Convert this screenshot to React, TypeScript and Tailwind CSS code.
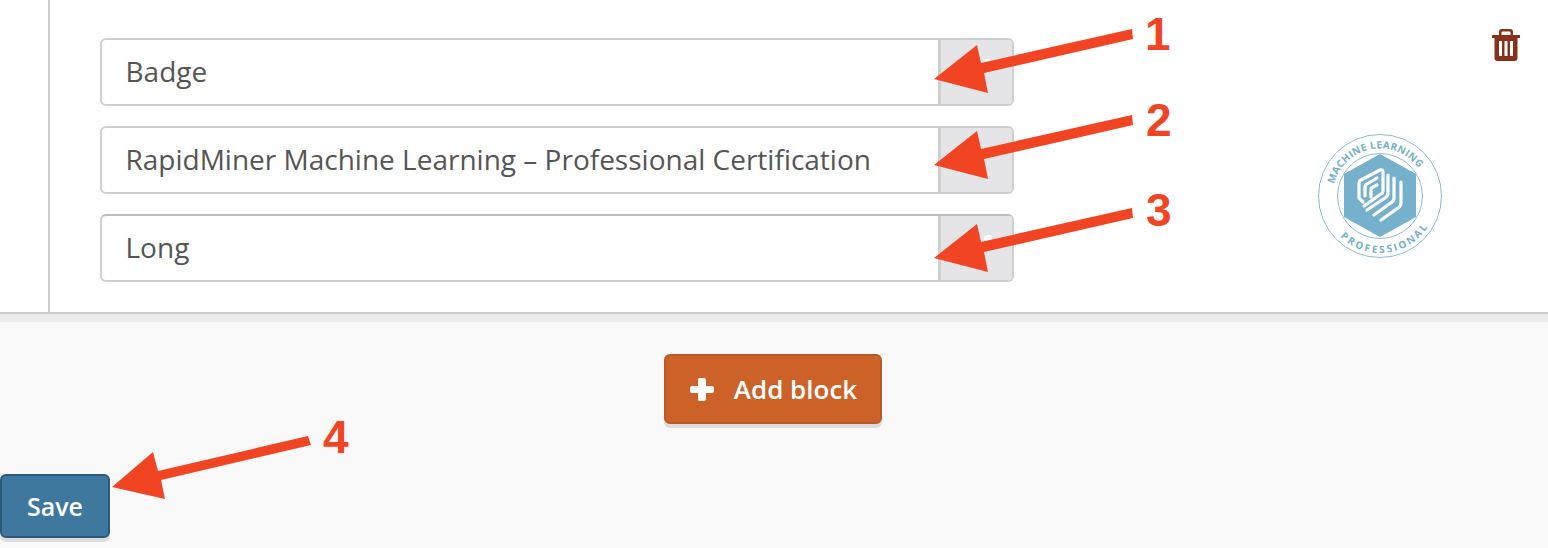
const arrows = [
  "934,79 977,45 981,63 1132,29 1133,39 984,73 988,93",
  "934,165 977,131 981,149 1132,115 1133,125 984,159 988,179",
  "934,258 977,224 981,242 1132,208 1133,218 984,252 988,272",
  "112,487 153,452 158,471 308,436 311,445 161,480 165,499",
];

const Field = ({ value, dot, darkTop }: { value: string; dot?: boolean; darkTop?: boolean }) => (
  <div
    className={`flex h-[68px] w-[914px] overflow-hidden rounded-[6px] border-2 border-[#cfcfcf] bg-white ${
      darkTop ? "border-t-[#bdbdbd]" : ""
    }`}
  >
    <div className="flex flex-1 items-center pb-[2px] pl-[24px] text-[28px] text-[#555555]">
      <span className="-ml-[0.5px]">{value}</span>
    </div>
    <div className="relative w-[74px] border-l-[3px] border-[#cfcfcf] bg-[#e5e5e8]">
      {dot && <span className="absolute left-[43px] top-[19px] h-[6px] w-[8px] rounded-full bg-white" />}
    </div>
  </div>
);

const TrashIcon = () => (
  <svg width="30" height="34" viewBox="0 0 30 34" className="block">
    <path
      fill="#87301a"
      fillRule="evenodd"
      d="M8 7 L8 4 Q8 1 11 1 L19 1 Q22 1 22 4 L22 7 L29 7 L29 10 L26.5 10 L26.5 30 Q26.5 33 23.5 33 L6.5 33 Q3.5 33 3.5 30 L3.5 10 L1 10 L1 7 Z M10.5 7 L19.5 7 L19.5 4.5 Q19.5 3.5 18.5 3.5 L11.5 3.5 Q10.5 3.5 10.5 4.5 Z M8 13 L8 28 L11 28 L11 13 Z M13.5 13 L13.5 28 L16.5 28 L16.5 13 Z M19 13 L19 28 L22 28 L22 13 Z"
    />
  </svg>
);

const BadgeLogo = () => (
  <svg width="126" height="126" viewBox="0 0 126 126" className="block">
    <defs>
      <path id="arcTop" d="M 17 51 A 47.5 47.5 0 0 1 101.4 35" />
      <path id="arcBottom" d="M 23.2 103.8 A 57 57 0 0 0 110.6 94.4" />
    </defs>
    <circle cx="63" cy="63" r="61.5" fill="none" stroke="#8abdd5" strokeWidth="1" />
    <circle cx="63" cy="63" r="42.5" fill="none" stroke="#8abdd5" strokeWidth="1" />
    <polygon points="63,21 99,41 99,84 63,104 27,84 27,41" fill="#75b0cc" />
    <g fill="none" stroke="white" strokeWidth="3.2" strokeLinecap="round" strokeLinejoin="round">
      <path d="M46 69 L42 65 L42 50 Q42 48 44 47 L63 37 Q66 36 66 39 L66 58 Q66 60 64 61 L47 73" />
      <path d="M48 63 L48 53 Q48 52 50 51 L60 45" />
      <path d="M54 64 L54 56 Q54 55 56 54 L60 52" />
      <path d="M50 77 L68 65 Q71 63 71 60 L71 42" />
      <path d="M57 82 L75 69 Q77 68 77 65 L77 45" />
      <path d="M64 87 L81 75 Q84 73 84 70 L84 49" />
    </g>
    <text fill="#75b0cc" fontSize="10" fontWeight="700" fontFamily="'Open Sans', sans-serif">
      <textPath href="#arcTop" textLength="107" lengthAdjust="spacing">MACHINE LEARNING</textPath>
    </text>
    <text fill="#75b0cc" fontSize="10" fontWeight="700" fontFamily="'Open Sans', sans-serif">
      <textPath href="#arcBottom" textLength="100" lengthAdjust="spacing">PROFESSIONAL</textPath>
    </text>
  </svg>
);

const PlusIcon = () => (
  <svg width="26" height="26" viewBox="0 0 26 26" className="block">
    <path
      fill="white"
      d="M10 1 H15 Q17 1 17 3 V9 H23 Q25 9 25 11 V14 Q25 16 23 16 H17 V22 Q17 24 15 24 H10 Q9 24 9 22 V16 H3 Q1 16 1 14 V11 Q1 9 3 9 H9 V3 Q9 1 10 1 Z"
    />
  </svg>
);

export default function App() {
  return (
    <div className="relative flex h-[548px] w-full flex-col overflow-hidden bg-[#f9f9f9] font-['Open_Sans',sans-serif]">
      {/* block card */}
      <div className="h-[314px] border-b-2 border-[#cccccc] bg-white pl-[48px]">
        <div className="flex h-full border-l-2 border-[#cccccc]">
          <div className="flex flex-col gap-[20px] pl-[50px] pt-[38px]">
            <Field value="Badge" dot />
            <Field value="RapidMiner Machine Learning – Professional Certification" />
            <Field value="Long" dot darkTop />
          </div>
          <div className="flex flex-1 flex-col">
            <div className="ml-[477px] mt-[28px]">
              <TrashIcon />
            </div>
            <div className="ml-[303px] mt-[71px]">
              <BadgeLogo />
            </div>
          </div>
        </div>
      </div>
      <div className="h-[8px] bg-[#ebebeb]" />

      <div className="mt-[32px] flex justify-center pr-[2px]">
        <button className="flex h-[70px] w-[218px] items-center justify-center gap-[19px] rounded-[6px] border-2 border-[#b85a28] bg-[#cd6228] pt-[1px] text-[26px] font-semibold text-white shadow-[0_4px_0_#dddddd]">
          <PlusIcon />
          Add block
        </button>
      </div>

      <div className="mt-[50px]">
        <button className="h-[64px] w-[110px] rounded-[6px] border-2 border-[#2d5a7b] bg-[#3f789f] pt-[1px] text-[25px] font-semibold text-white shadow-[0_4px_0_#dddddd]">
          Save
        </button>
      </div>

      {/* annotations drawn over the screenshot */}
      <svg width="1548" height="548" className="pointer-events-none absolute left-0 top-0">
        {arrows.map((points) => (
          <polygon key={points} points={points} fill="#f04423" />
        ))}
      </svg>
      <span className="absolute left-[1145px] top-[8px] font-['Liberation_Sans',sans-serif] text-[46px] font-bold leading-[52px] text-[#f04423]">1</span>
      <span className="absolute left-[1146px] top-[94px] font-['Liberation_Sans',sans-serif] text-[46px] font-bold leading-[52px] text-[#f04423]">2</span>
      <span className="absolute left-[1146px] top-[184px] font-['Liberation_Sans',sans-serif] text-[46px] font-bold leading-[52px] text-[#f04423]">3</span>
      <span className="absolute left-[323px] top-[411px] font-['Liberation_Sans',sans-serif] text-[46px] font-bold leading-[52px] text-[#f04423]">4</span>
    </div>
  );
}
